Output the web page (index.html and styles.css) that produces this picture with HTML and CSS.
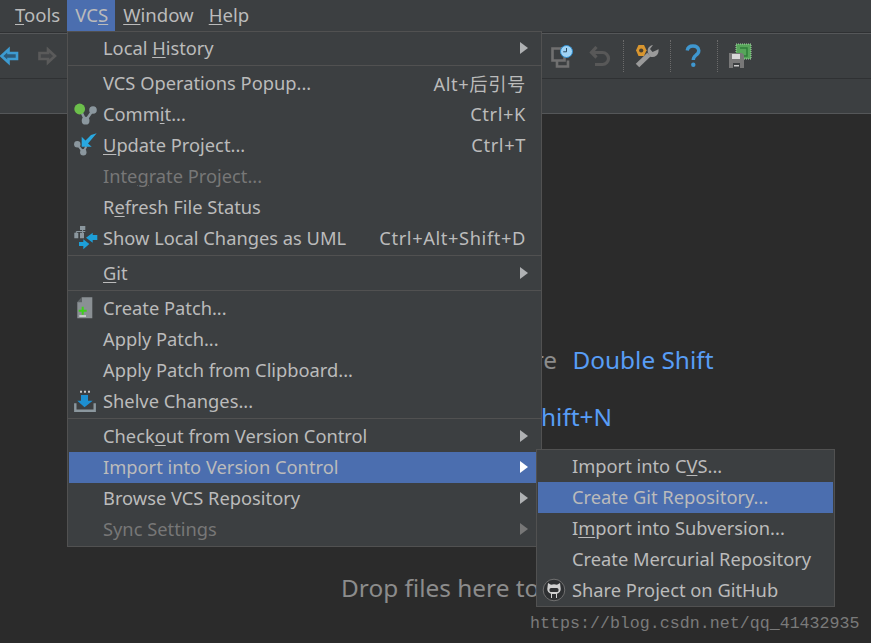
FILE: index.html
```html
<!DOCTYPE html>
<html lang="en">
<head>
<meta charset="utf-8">
<title>VCS menu</title>
<link rel="stylesheet" href="styles.css">
</head>
<body>
<div class="ide">
  <nav class="menubar">
    <span class="top"><u>T</u>ools</span>
    <span class="top active">VC<u>S</u></span>
    <span class="top"><u>W</u>indow</span>
    <span class="top"><u>H</u>elp</span>
  </nav>
  <div class="toolbar">
    <svg class="tool-back" width="19" height="20" viewBox="0 0 19 20"><path d="M1.500 10 8.500 3.500V7H17v6H8.500v3.500z" fill="#2c5a78" stroke="#3d9bd1" stroke-width="2.600"/></svg>
    <svg class="tool-fwd" width="20" height="20" viewBox="0 0 20 20"><path d="M18 10 11 3.500V7H2.500v6H11v3.500z" fill="#444648" stroke="#5a5a5a" stroke-width="2.600"/></svg>
    <svg class="tool-hist" width="22" height="23" viewBox="0 0 22 23"><path d="M1.500 3.500h12v12h-12zM6 15.500v6h11v-6" fill="none" stroke="#707070" stroke-width="2.600"/><circle cx="15.500" cy="6.500" r="6" fill="#9fd3f5" stroke="#2f8fd0"/><path d="M15.500 3v3.800h-3.300" fill="none" stroke="#2c4a60"/></svg>
    <svg class="tool-undo" width="22" height="21" viewBox="0 0 22 21"><path d="M7.500 1 2.500 6.500l5 5M3 6.500h10.500a6 6 0 0 1 0 12H6" fill="none" stroke="#585858" stroke-width="3.200"/></svg>
    <i class="dots dots-a"></i>
    <svg class="tool-wrench" width="24" height="23" viewBox="0 0 24 23"><path d="M2.500 20.500 14 9.500" stroke="#9a9a9a" stroke-width="5" fill="none"/><path d="M18 0l-3 4 2.500 3L22 5l1.500-1q.5 4-2 6.500-3 2.500-6.500 1L13 8q-1-4 1-6 2-2 4-2z" fill="#9a9a9a"/><path d="M3.500 0h5.500l2.500 5.300L9 11H3.500L1 5.300z" fill="#d9962f"/><circle cx="6.200" cy="5.500" r="2.100" fill="#4a4030"/></svg>
    <i class="dots dots-b"></i>
    <svg class="tool-help" width="16" height="24" viewBox="0 0 16 24"><path d="M2.200 6.500Q3 2 8 2t5.800 4.500q0 3-3 4.800Q8.300 13 8.300 16" fill="none" stroke="#3f97cf" stroke-width="3.400"/><circle cx="8.300" cy="20.700" r="2.200" fill="#3f97cf"/></svg>
    <i class="dots dots-c"></i>
    <svg class="tool-save" width="24" height="26" viewBox="0 0 24 26"><rect x="7" y="1" width="15" height="15" fill="#57a55a" stroke="#a8cfa8" stroke-dasharray="1 1"/><path d="M11 5h7v8h-4" fill="none" stroke="#2f7d3a" stroke-width="1.500"/><path d="M0 10h13l2 2v13H0z" fill="#787878"/><rect x="3" y="11" width="8" height="5" fill="#d8d8d8"/><rect x="4" y="20" width="7" height="5" fill="#3c3f41"/><rect x="5" y="22" width="5" height="1.500" fill="#cccccc"/></svg>
  </div>
  <div class="subbar"></div>
  <main class="editor">
    <p class="hint hint-search">Search Everywhere <b>Double Shift</b></p>
    <p class="hint hint-file">Go to File <b>Ctrl+Shift+N</b></p>
    <p class="hint hint-drop">Drop files here to</p>
    <span class="mark">https://blog.csdn.net/qq_41432935</span>
  </main>

  <div class="menu main-menu">
    <div class="row"><span class="label">Local <u>H</u>istory</span><i class="arrow"></i></div>
    <hr>
    <div class="row"><span class="label">VCS Operations Popup...</span><span class="key">Alt+后引号</span></div>
    <div class="row"><svg class="ico" width="26" height="24" viewBox="0 0 26 24"><path d="M7 7l5.600 11.700L20 8" fill="none" stroke="#8b979e" stroke-width="2.500"/><circle cx="20" cy="8" r="3.800" fill="#8b979e"/><circle cx="12.600" cy="18.700" r="3.900" fill="#8b979e"/><circle cx="6.700" cy="7" r="5.400" fill="#6cbf4b"/></svg><span class="label">Comm<u>i</u>t...</span><span class="key">Ctrl+K</span></div>
    <div class="row"><svg class="ico" width="26" height="24" viewBox="0 0 26 24"><path d="M4.300 11.300l6 8 3-6" fill="none" stroke="#8b979e" stroke-width="2"/><circle cx="4.300" cy="11.300" r="3.200" fill="#8b979e"/><circle cx="10.300" cy="19.300" r="3.200" fill="#8b979e"/><path d="M8.700 3.700v10h10L15 10.500 23.700.3 18 2l-5.500 5.500z" fill="#29a8e0"/></svg><span class="label"><u>U</u>pdate Project...</span><span class="key">Ctrl+T</span></div>
    <div class="row off"><span class="label">Inte<u>g</u>rate Project...</span></div>
    <div class="row"><span class="label">R<u>e</u>fresh File Status</span></div>
    <div class="row"><svg class="ico" width="26" height="24" viewBox="0 0 26 24"><path d="M7 0h5.300v4H7zM1.300 6.700h4v5.600h-4zM7 6.700h4v5.600H7z" fill="#8b979e"/><path d="M9.600 4v3M3.300 7V5.500h9" fill="none" stroke="#8b979e"/><path d="M13 11.700l6.700-5v2.300h4.600v5h-4.600v2.700z" fill="#1d9fd8"/><path d="M16.300 18l-6-4.700V16H6v4h4.300v3.300z" fill="#1d9fd8"/></svg><span class="label">Show Local Changes as UML</span><span class="key">Ctrl+Alt+Shift+D</span></div>
    <hr>
    <div class="row"><span class="label"><u>G</u>it</span><i class="arrow"></i></div>
    <hr>
    <div class="row"><svg class="ico" width="26" height="24" viewBox="0 0 26 24"><path d="M9 1.300h10.300v21h-15V6.300z" fill="#8a9094"/><path d="M4.300 6.300H9v-5z" fill="#5b6063"/><path d="M9.700 10.700v8M5.700 14.700h8" stroke="#3fd01c" stroke-width="2"/><path d="M6.300 20h6.700" stroke="#e8e8e8" stroke-width="1.300"/></svg><span class="label">Create Patch...</span></div>
    <div class="row"><span class="label">Apply Patch...</span></div>
    <div class="row"><span class="label">Apply Patch from Clipboard...</span></div>
    <div class="row"><svg class="ico" width="26" height="24" viewBox="0 0 26 24"><path d="M7 2.700h2M11 2.700h2M15 2.700h2" stroke="#c8c8c8" stroke-width="2"/><path d="M2.300 14.300v7.400h19.400v-7.400" fill="none" stroke="#8b979e" stroke-width="2.400"/><path d="M8 6h7v5.700h4.700L11.500 18.300 4.300 11.700H8z" fill="#1d8fd0"/></svg><span class="label">Shelve Changes...</span></div>
    <hr>
    <div class="row"><span class="label">Check<u>o</u>ut from Version Control</span><i class="arrow"></i></div>
    <div class="row on"><span class="label">Import into Version Control</span><i class="arrow"></i></div>
    <div class="row"><span class="label">Browse VCS Repository</span><i class="arrow"></i></div>
    <div class="row off"><span class="label">Sync Settings</span><i class="arrow"></i></div>
  </div>

  <div class="menu sub-menu">
    <div class="row"><span class="label">Import into C<u>V</u>S...</span></div>
    <div class="row on"><span class="label">Create Git Repository...</span></div>
    <div class="row"><span class="label">I<u>m</u>port into Subversion...</span></div>
    <div class="row"><span class="label">Create Mercurial Repository</span></div>
    <div class="row"><svg class="ico" width="24" height="24" viewBox="0 0 24 24"><circle cx="12" cy="12" r="10.800" fill="#2e3032" stroke="#707070"/><path d="M6 5l3 1.700q3-.7 6 0L18 5l.5 4q1 4-2 6-1 .5-1.500.7V20H9v-4.300q-.5-.2-1.500-.7-3-2-2-6z" fill="#d0d0d0"/><rect x="7.500" y="10" width="9" height="4" rx="1.500" fill="#2e3032"/><rect x="10" y="16" width="4" height="4" fill="#2e3032"/></svg><span class="label">Share Project on GitHub</span></div>
  </div>
</div>
</body>
</html>
```
FILE: styles.css
```css
* { box-sizing: border-box; }
html, body { margin: 0; height: 100%; background: #2b2b2b; }
.ide {
  position: relative;
  width: 871px;
  height: 643px;
  overflow: hidden;
  display: flex;
  flex-direction: column;
  font-family: "Noto Sans", "Noto Sans CJK SC", sans-serif;
  font-size: 18.300px;
  color: #bbbbbb;
  background: #2b2b2b;
}
u { text-underline-offset: 2px; text-decoration-thickness: 1px; }
.menubar {
  height: 33px;
  flex: none;
  display: flex;
  padding-left: 7px;
  font-size: 18.600px;
  background: #3c3f41;
  border-bottom: 1px solid #2f3133;
}
.top { height: 31px; padding: 0 7px 0 8px; line-height: 30px; }
.top.active { background: #4b6eaf; }
.toolbar {
  height: 46px;
  flex: none;
  display: flex;
  align-items: center;
  background: #3c3f41;
  border-top: 1px solid #555759;
  border-bottom: 1px solid #2f3133;
}
.tool-back { margin-left: 0; }
.tool-fwd { margin-left: 18px; }
.tool-hist { margin-left: 494px; }
.tool-undo { margin-left: 16px; }
.dots { width: 1px; height: 32px; border-left: 1px dotted #6b6b6b; }
.dots-a { margin-left: 12px; }
.tool-wrench { margin-left: 11px; }
.dots-b { margin-left: 11px; }
.tool-help { margin-left: 14px; }
.dots-c { margin-left: 16px; }
.tool-save { margin-left: 11px; }
.subbar {
  height: 35px;
  flex: none;
  background: #3c3f41;
  border-bottom: 1px solid #555759;
}
.editor {
  position: relative;
  flex: 1;
  background: #2b2b2b;
  font-size: 24.400px;
  color: #8c8c8c;
}
.hint { margin: 0; white-space: nowrap; line-height: 32px; }
.hint b { font-weight: 400; color: #589df6; margin-left: 9px; }
.hint-search { margin: 230px 0 0 340px; }
.hint-file { margin: 25px 0 0 350px; }
.hint-drop { margin: 139px 0 0 341px; }
.mark {
  position: absolute;
  left: 530px;
  top: 500px;
  font-family: "Liberation Mono", monospace;
  font-size: 16.650px;
  color: #7a7a7a;
}
.menu {
  position: absolute;
  background: #3c3f41;
  border: 1px solid #515151;
  padding: 1px;
}
.main-menu { left: 67px; top: 31px; width: 475px; height: 516px; }
.sub-menu { left: 536px; top: 449px; width: 299px; height: 158px; }
.row {
  position: relative;
  height: 31px;
  display: flex;
  align-items: center;
  padding: 0 14px 2px 34px;
}
.menu hr { height: 1px; margin: 1px -1px 2px; border: 0; background: #515151; }
.label { white-space: nowrap; line-height: 29px; }
.key { margin-left: auto; white-space: nowrap; letter-spacing: 0.600px; }
.arrow {
  position: absolute;
  right: 12px;
  top: 9px;
  border-left: 8px solid #afb1b3;
  border-top: 6px solid transparent;
  border-bottom: 6px solid transparent;
}
.ico { position: absolute; left: 4px; top: 3px; }
.row.on { background: #4b6eaf; }
.row.on .arrow { border-left-color: #ffffff; }
.row.off { color: #777777; }
.row.off .arrow { border-left-color: #777777; }
```
